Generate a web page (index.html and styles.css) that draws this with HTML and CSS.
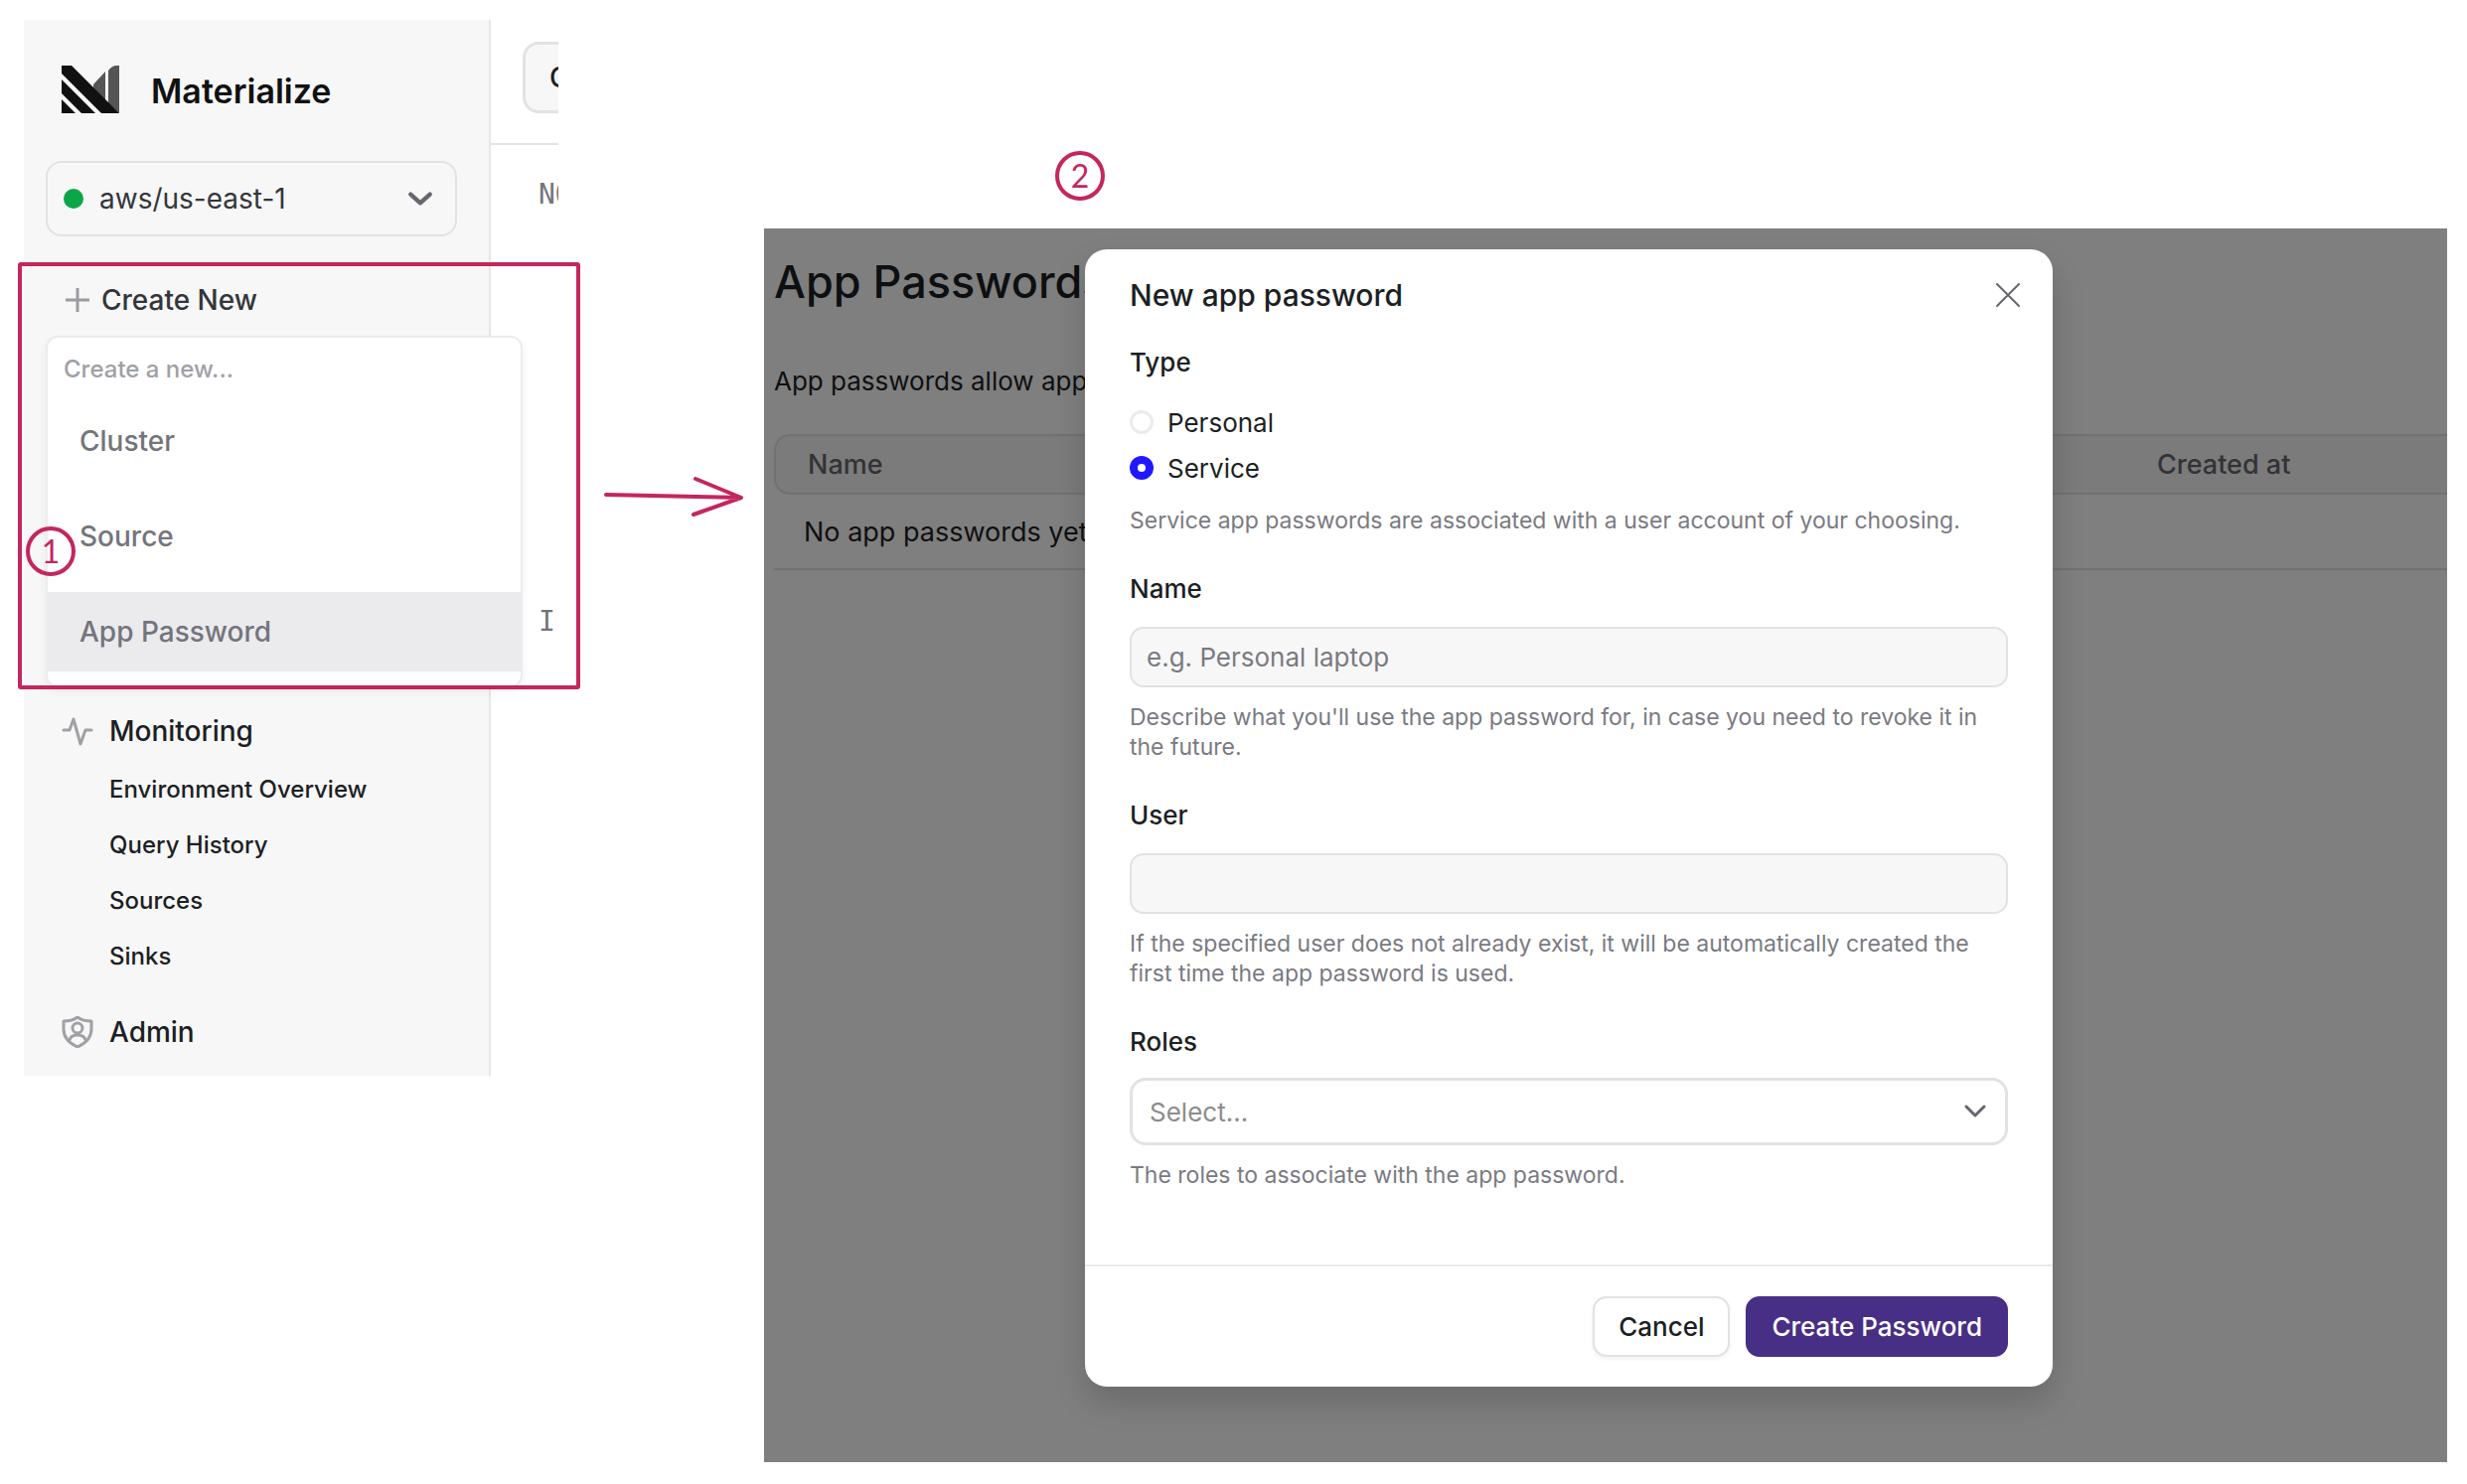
FILE: index.html
```html
<!DOCTYPE html>
<html lang="en">
<head>
<meta charset="utf-8">
<title>Create an app password</title>
<link rel="stylesheet" href="styles.css">
</head>
<body>
<main class="board">
  <section class="console">
    <aside class="sidebar">
      <div class="brand">
        <svg class="brand-logo" viewBox="0 0 58 48" aria-hidden="true">
          <path fill="#555" d="M32 19 44 6v30L32 24zM47 5Q51 0 55 0h3v48L47 38z"/>
          <path fill="#111" d="M0 0h10l48 48H40L0 8zM0 14l34 34H20L0 28zM0 34l14 14H0z"/>
        </svg>
        <span class="brand-name">Materialize</span>
      </div>
      <div class="region">
        <span class="region-dot"></span>
        <select class="region-select" aria-label="Region"><option>aws/us-east-1</option></select>
        <svg class="region-chevron" viewBox="0 0 24 14" aria-hidden="true"><path d="M3 3l9 8 9-8"/></svg>
      </div>
      <button class="create-new" type="button">
        <svg class="plus" viewBox="0 0 24 24" aria-hidden="true"><path d="M12 0v24M0 12h24"/></svg>
        Create New
      </button>
      <div class="menu">
        <p class="menu-title">Create a new...</p>
        <button class="menu-item" type="button">Cluster</button>
        <button class="menu-item" type="button">Source</button>
        <button class="menu-item menu-item-active" type="button">App Password</button>
      </div>
      <nav class="nav">
        <a class="nav-main" href="#monitoring">
          <svg class="nav-icon" viewBox="0 0 32 32" aria-hidden="true"><path d="M2 15h6l4-11 7 25 5-14h6"/></svg>
          Monitoring
        </a>
        <a class="nav-sub" href="#overview">Environment Overview</a>
        <a class="nav-sub" href="#history">Query History</a>
        <a class="nav-sub" href="#sources">Sources</a>
        <a class="nav-sub" href="#sinks">Sinks</a>
        <a class="nav-main nav-admin" href="#admin">
          <svg class="nav-icon" viewBox="0 0 32 32" aria-hidden="true"><path d="M16 1c4 3 9 4 14 4v8c0 8-5 14-14 18C7 27 2 21 2 13V5c5 0 10-1 14-4z"/><circle cx="16" cy="12" r="5"/><path d="M8 24c1-4 4-5 8-5s7 1 8 5"/></svg>
          Admin
        </a>
      </nav>
    </aside>
    <div class="strip">
      <div class="strip-bar"><button class="strip-button" type="button">C</button></div>
      <p class="strip-code">NO</p>
      <p class="strip-code strip-code-low">I,</p>
    </div>
  </section>

  <svg class="arrow" viewBox="0 0 144 44" aria-hidden="true"><path d="M4 20l136 3M94 4l46 19-48 17"/></svg>

  <div class="step">
    <span class="badge badge-two">2</span>
    <section class="window">
      <div class="page">
        <h1 class="page-title">App Passwords</h1>
        <p class="page-text">App passwords allow app</p>
        <table class="table">
          <thead><tr><th>Name</th><th class="created">Created at</th></tr></thead>
          <tbody><tr><td colspan="2">No app passwords yet</td></tr></tbody>
        </table>
      </div>
      <div class="overlay">
        <form class="dialog" role="dialog" aria-labelledby="dialog-title">
          <div class="dialog-body">
            <header class="dialog-head">
              <h2 class="dialog-title" id="dialog-title">New app password</h2>
              <button class="close" type="button" aria-label="Close"><svg viewBox="0 0 24 24" aria-hidden="true"><path d="M1 1l22 22M23 1 1 23"/></svg></button>
            </header>
            <fieldset class="field field-type">
              <legend class="label">Type</legend>
              <label class="choice"><input class="radio" type="radio" name="type">Personal</label>
              <label class="choice"><input class="radio" type="radio" name="type" checked>Service</label>
              <p class="hint">Service app passwords are associated with a user account of your choosing.</p>
            </fieldset>
            <div class="field">
              <label class="label" for="name">Name</label>
              <input class="input" id="name" type="text" placeholder="e.g. Personal laptop">
              <p class="hint">Describe what you'll use the app password for, in case you need to revoke it in the future.</p>
            </div>
            <div class="field">
              <label class="label" for="user">User</label>
              <input class="input" id="user" type="text">
              <p class="hint">If the specified user does not already exist, it will be automatically created the first time the app password is used.</p>
            </div>
            <div class="field">
              <label class="label" for="roles">Roles</label>
              <div class="roles">
                <select class="roles-select" id="roles"><option>Select...</option></select>
                <svg class="roles-chevron" viewBox="0 0 22 14" aria-hidden="true"><path d="M2 2l9 9 9-9"/></svg>
              </div>
              <p class="hint">The roles to associate with the app password.</p>
            </div>
          </div>
          <footer class="dialog-foot">
            <button class="button" type="button">Cancel</button>
            <button class="button button-primary" type="submit">Create Password</button>
          </footer>
        </form>
      </div>
    </section>
  </div>

  <div class="highlight"></div>
  <span class="badge badge-one">1</span>
</main>
</body>
</html>
```
FILE: styles.css
```css
* { box-sizing: border-box; }
body { margin: 0; background: #fff; color: #1c1f24; font-family: Inter, "Liberation Sans", sans-serif; }
h1, h2, p, fieldset, legend { margin: 0; padding: 0; border: 0; }
button, input, select { font: inherit; color: inherit; }
svg { fill: none; stroke-linecap: round; stroke-linejoin: round; }

.board { position: relative; display: flex; align-items: flex-start; padding: 20px 20px 20px 24px; }

/* Console sidebar */
.console { display: flex; flex: none; width: 538px; }
.sidebar { flex: none; width: 470px; padding: 46px 32px 22px 22px; border-right: 2px solid #e6e6e9; background: #f7f7f7; }
.brand { display: flex; align-items: center; gap: 32px; height: 48px; padding-left: 16px; }
.brand-logo { width: 58px; height: 48px; }
.brand-name { font-size: 34px; line-height: 40px; font-weight: 600; color: #111; padding-top: 4px; }

.region { position: relative; display: flex; align-items: center; margin-top: 48px; }
.region-dot { position: absolute; left: 18px; width: 20px; height: 20px; border-radius: 50%; background: #0aa648; pointer-events: none; }
.region-select { appearance: none; width: 100%; height: 76px; padding: 0 64px 0 52px; border: 2px solid #e2e2e6; border-radius: 16px; background: transparent; font-size: 28px; color: #33363b; }
.region-chevron { position: absolute; right: 24px; width: 26px; height: 16px; stroke: #66666e; stroke-width: 4; pointer-events: none; }

.create-new { display: flex; align-items: center; gap: 12px; height: 40px; margin-top: 44px; padding: 0 0 0 20px; border: 0; background: none; font-size: 28px; font-weight: 500; color: #33363b; }
.plus { width: 24px; height: 24px; stroke: #9b9ba2; stroke-width: 3; }

.menu { position: relative; width: 480px; margin-top: 16px; padding-bottom: 14px; border: 2px solid #ececef; border-radius: 12px; background: #fff; box-shadow: 0 4px 8px rgba(0, 0, 0, .06); }
.menu-title { padding: 16px; font-size: 24px; line-height: 32px; font-weight: 500; color: #a0a0a6; }
.menu-item { display: block; width: 100%; height: 80px; margin: 0 0 16px; padding: 0 32px; border: 0; background: none; text-align: left; font-size: 28px; font-weight: 500; color: #74747c; }
.menu-item-active { margin: 0; background: #ebebed; }

.nav { display: flex; flex-direction: column; margin-top: 22px; padding-left: 16px; }
.nav a { color: inherit; text-decoration: none; font-weight: 500; }
.nav-main { display: flex; align-items: center; gap: 16px; height: 44px; font-size: 28px; }
.nav-icon { width: 32px; height: 32px; stroke: #a0a0a6; stroke-width: 3; }
.nav-sub { height: 56px; padding-left: 48px; font-size: 24px; line-height: 74px; }
.nav-admin { margin-top: 35px; }

.strip { flex: 1; min-width: 0; overflow: hidden; }
.strip-bar { height: 126px; padding: 22px 0 0 32px; border-bottom: 2px solid #e2e2e8; }
.strip-button { width: 200px; height: 72px; padding: 0 24px; border: 3px solid #e2e2e6; border-radius: 16px; background: #f7f7f7; text-align: left; font-size: 28px; font-weight: 500; }
.strip-code { padding-left: 48px; margin-top: 34px; font: 28px/32px "DejaVu Sans Mono", monospace; color: #74747c; white-space: nowrap; }
.strip-code-low { margin-top: 398px; }

/* Annotations */
.arrow { flex: none; width: 144px; height: 44px; margin: 458px 19px 0 44px; stroke: #c4265e; stroke-width: 4; }
.badge { display: flex; align-items: center; justify-content: center; width: 50px; height: 50px; border: 4px solid #c4265e; border-radius: 50%; color: #c4265e; font: 32px/40px Lato, sans-serif; }
.badge-two { margin: 132px 0 28px 293px; }
.badge-one { position: absolute; left: 26px; top: 530px; }
.highlight { position: absolute; left: 18px; top: 264px; width: 566px; height: 430px; border: 4px solid #c4265e; border-radius: 3px; pointer-events: none; }

/* App passwords page */
.step { flex: 1; min-width: 0; }
.window { display: grid; overflow: hidden; background: #fff; }
.page, .overlay { grid-area: 1 / 1; min-width: 0; }
.page { padding: 26px 0 0 10px; }
.page-title { font-size: 45px; line-height: 56px; font-weight: 500; }
.page-text { margin-top: 54px; font-size: 26px; line-height: 36px; }
.table { width: 100%; margin-top: 35px; border-collapse: separate; border-spacing: 0; text-align: left; font-size: 27px; }
.table th { height: 61px; padding: 0 32px; border: solid #e2e2e6; border-width: 2px 0; background: #f7f7f7; font-weight: 500; color: #66666e; }
.table th:first-child { border-left-width: 2px; border-radius: 16px 0 0 16px; }
.table .created { width: 324px; }
.table td { height: 76px; padding: 0 30px; border-bottom: 2px solid #e2e2e6; }

.overlay { z-index: 1; padding: 21px 0 76px; background: rgba(0, 0, 0, .5); display: flex; justify-content: center; }

/* Dialog */
.dialog { width: 974px; margin-right: 74px; border-radius: 22px; background: #fff; box-shadow: 0 16px 32px rgba(0, 0, 0, .16); }
.dialog-body { padding: 28px 45px 75px; }
.dialog-head { display: flex; align-items: center; justify-content: space-between; height: 36px; }
.dialog-title { font-size: 30px; line-height: 36px; font-weight: 500; }
.close { display: flex; width: 40px; height: 40px; margin-right: -20px; padding: 8px; border: 0; background: none; }
.close svg { width: 24px; height: 24px; stroke: #66666e; stroke-width: 2; }
.field { display: flex; flex-direction: column; margin-top: 38px; }
.field-type { display: block; margin-top: 34px; }
.label { font-size: 26px; line-height: 32px; font-weight: 500; }
.field-type .label { margin-bottom: 21px; }
.choice { display: flex; align-items: center; gap: 14px; height: 46px; font-size: 26px; }
.radio { appearance: none; width: 24px; height: 24px; margin: 0; border: 3px solid #ebebed; border-radius: 50%; background: #fff; }
.radio:checked { border: 8px solid #2218ff; }
.hint { margin-top: 15px; font-size: 23px; line-height: 30px; color: #7a7a82; }
.input { width: 100%; height: 61px; margin-top: 22px; padding: 0 15px; border: 2px solid #e2e2e6; border-radius: 14px; background: #f7f7f7; font-size: 26px; }
.input::placeholder { color: #7a7a82; opacity: 1; }
.roles { position: relative; display: flex; align-items: center; margin-top: 20px; }
.roles-select { appearance: none; width: 100%; height: 68px; padding: 0 56px 0 17px; border: 3px solid #e2e2e6; border-radius: 16px; background: #fff; font-size: 26px; color: #8c8c8c; }
.roles-chevron { position: absolute; right: 22px; width: 22px; height: 14px; stroke: #66666e; stroke-width: 3; pointer-events: none; }
.dialog-foot { display: flex; justify-content: flex-end; gap: 16px; padding: 30px 45px; border-top: 2px solid #ebebed; }
.button { height: 61px; padding: 0 24px; border: 2px solid #e2e2e6; border-radius: 14px; background: #fff; font-size: 26px; font-weight: 500; box-shadow: 0 2px 4px rgba(0, 0, 0, .06); }
.button-primary { border-color: #472f85; background: #472f85; color: #fff; box-shadow: none; }
```
